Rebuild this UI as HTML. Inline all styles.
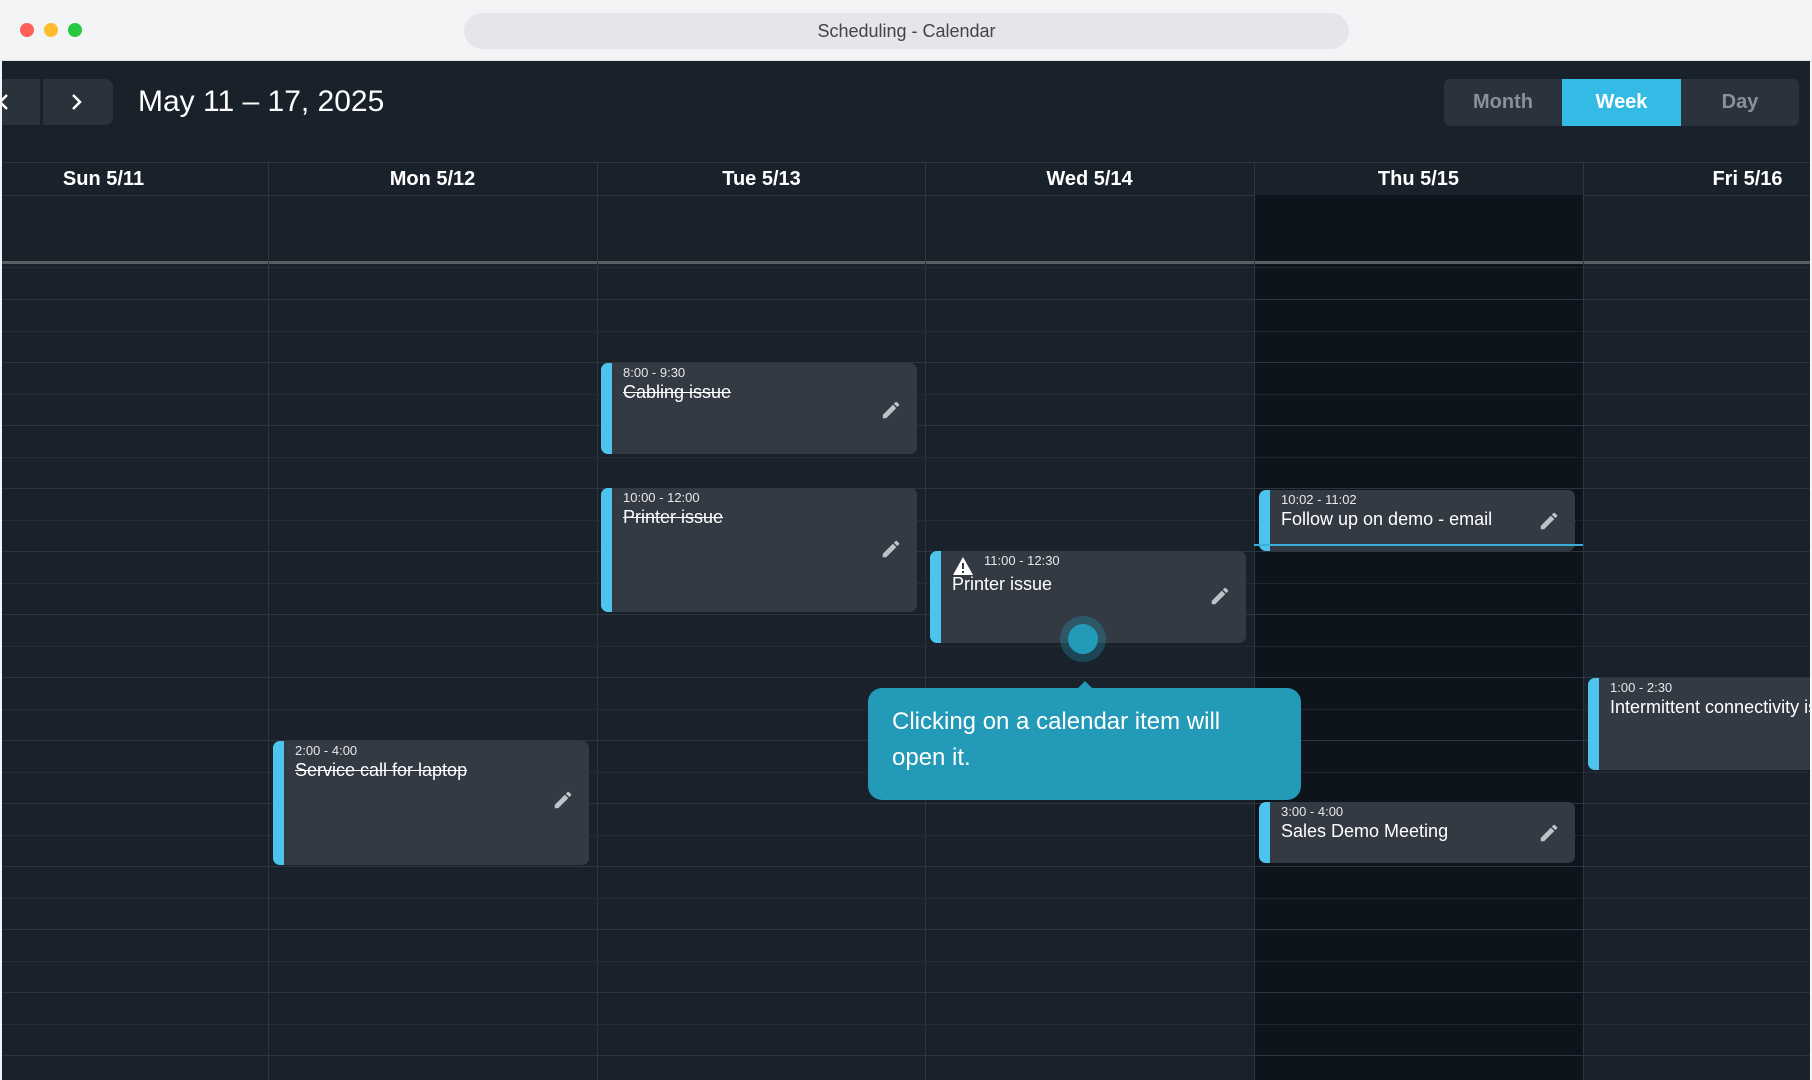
<!DOCTYPE html>
<html><head><style>
*{box-sizing:border-box;margin:0;padding:0}
body{width:1812px;height:1080px;overflow:hidden;background:#f3f4f6;font-family:"Liberation Sans",sans-serif;position:relative}
.tb{position:absolute;left:0;top:0;width:1812px;height:61px;background:#f3f4f6;border-bottom:1px solid #e2e4e8}
.dot{position:absolute;top:23px;width:14px;height:14px;border-radius:50%}
.addr{position:absolute;left:464px;top:13px;width:885px;height:36px;border-radius:18px;background:#e4e6ea;color:#444;font-size:18px;text-align:center;line-height:36px}
.app{position:absolute;left:2px;top:61px;width:1808px;height:1019px;background:#19212b;overflow:hidden}
.abs{position:absolute}
.hl{position:absolute;left:0;width:1808px;height:1px;background:#2c3540}
.dl{position:absolute;left:0;width:1808px;height:0;border-top:1px dotted #2c3540}
.vl{position:absolute;width:1px;background:#2c3540}
.hd{position:absolute;top:102px;width:329px;text-align:center;color:#fff;font-weight:bold;font-size:20px;line-height:33px}
.ev{position:absolute;background:#333a44;border-radius:7px;overflow:hidden;color:#fff}
.ev .bar{position:absolute;left:0;top:0;bottom:0;width:11px;background:#4cc4ee}
.ev .t{position:absolute;left:22px;top:2px;font-size:13px;color:#e8e8e8}
.ev .n{position:absolute;left:22px;top:19px;font-size:18px;white-space:nowrap}
.ev .s{text-decoration:line-through}
.ev svg{position:absolute;right:15px}
</style></head><body>
<div class="tb">
<div class="dot" style="left:20px;background:#fe5f57"></div>
<div class="dot" style="left:44px;background:#febc2e"></div>
<div class="dot" style="left:68px;background:#28c840"></div>
<div class="addr">Scheduling - Calendar</div>
</div>
<div class="app">
<div class="abs" style="left:-6px;top:18px;width:44px;height:46px;background:#2a323c"></div>
<svg class="abs" style="left:-4px;top:32px" width="14" height="18"><path d="M9 2l-7 7 7 7" stroke="#fff" stroke-width="2.5" fill="none"/></svg>
<div class="abs" style="left:41px;top:18px;width:70px;height:46px;background:#2a323c;border-radius:0 8px 8px 0"></div>
<svg class="abs" style="left:68px;top:32px" width="14" height="18"><path d="M3 2l7 7-7 7" stroke="#fff" stroke-width="2.5" fill="none"/></svg>
<div class="abs" style="left:136px;top:22px;color:#fff;font-size:30px;line-height:38px">May 11 – 17, 2025</div>
<div class="abs" style="left:1442px;top:18px;width:355px;height:47px;background:#2a323c;border-radius:6px"></div>
<div class="abs" style="left:1442px;top:18px;width:118px;height:47px;line-height:47px;text-align:center;color:#8a9099;font-weight:bold;font-size:20px">Month</div>
<div class="abs" style="left:1560px;top:18px;width:119px;height:47px;line-height:47px;text-align:center;color:#fff;font-weight:bold;font-size:20px;background:#33bbe6">Week</div>
<div class="abs" style="left:1679px;top:18px;width:118px;height:47px;line-height:47px;text-align:center;color:#8a9099;font-weight:bold;font-size:20px">Day</div>

<div class="hl" style="top:101px"></div>
<div class="hl" style="top:134px"></div>
<div class="abs" style="left:1252px;top:134px;width:329px;height:900px;background:#0d141c"></div>
<div class="abs" style="left:0;top:200px;width:1808px;height:3px;background:#5a5f66"></div>
<div class="dl" style="top:206px"></div>
<div class="hl" style="top:238px"></div><div class="dl" style="top:270px"></div>
<div class="hl" style="top:301px"></div><div class="dl" style="top:333px"></div>
<div class="hl" style="top:364px"></div><div class="dl" style="top:396px"></div>
<div class="hl" style="top:427px"></div><div class="dl" style="top:459px"></div>
<div class="hl" style="top:490px"></div><div class="dl" style="top:522px"></div>
<div class="hl" style="top:553px"></div><div class="dl" style="top:585px"></div>
<div class="hl" style="top:616px"></div><div class="dl" style="top:648px"></div>
<div class="hl" style="top:679px"></div><div class="dl" style="top:711px"></div>
<div class="hl" style="top:742px"></div><div class="dl" style="top:774px"></div>
<div class="hl" style="top:805px"></div><div class="dl" style="top:837px"></div>
<div class="hl" style="top:868px"></div><div class="dl" style="top:900px"></div>
<div class="hl" style="top:931px"></div><div class="dl" style="top:963px"></div>
<div class="hl" style="top:994px"></div>
<div class="vl" style="left:266px;top:101px;height:920px"></div>
<div class="vl" style="left:595px;top:101px;height:920px"></div>
<div class="vl" style="left:923px;top:101px;height:920px"></div>
<div class="vl" style="left:1252px;top:101px;height:920px"></div>
<div class="vl" style="left:1581px;top:101px;height:920px"></div>
<div class="hd" style="left:-63px">Sun 5/11</div>
<div class="hd" style="left:266px">Mon 5/12</div>
<div class="hd" style="left:595px">Tue 5/13</div>
<div class="hd" style="left:923px">Wed 5/14</div>
<div class="hd" style="left:1252px">Thu 5/15</div>
<div class="hd" style="left:1581px">Fri 5/16</div>

<svg width="0" height="0" style="position:absolute"><defs><symbol id="pen" viewBox="0 0 24 24"><path d="M3 17.25V21h3.75L17.81 9.94l-3.75-3.75L3 17.25zM20.71 7.04a1 1 0 000-1.410l-2.34-2.34a1 1 0 00-1.41 0l-1.83 1.83 3.75 3.75 1.83-1.83z" fill="#bfc3c8"/></symbol></defs></svg>

<div class="ev" style="left:599px;top:302px;width:316px;height:91px"><div class="bar"></div><div class="t">8:00 - 9:30</div><div class="n s">Cabling issue</div><svg style="top:36px" width="22" height="22"><use href="#pen"/></svg></div>
<div class="ev" style="left:599px;top:427px;width:316px;height:124px"><div class="bar"></div><div class="t">10:00 - 12:00</div><div class="n s">Printer issue</div><svg style="top:50px" width="22" height="22"><use href="#pen"/></svg></div>
<div class="ev" style="left:928px;top:490px;width:316px;height:92px"><div class="bar"></div>
<svg style="position:absolute;left:22px;top:5px" width="22" height="20" viewBox="0 0 22 20"><path d="M11 1L21 19H1z" fill="#fff"/><path d="M11 7v6M11 15v2" stroke="#333a44" stroke-width="2"/></svg>
<div class="t" style="left:54px">11:00 - 12:30</div><div class="n" style="top:23px">Printer issue</div><svg style="top:34px" width="22" height="22"><use href="#pen"/></svg></div>
<div class="ev" style="left:1257px;top:429px;width:316px;height:61px"><div class="bar"></div><div class="t">10:02 - 11:02</div><div class="n">Follow up on demo - email</div><svg style="top:20px" width="22" height="22"><use href="#pen"/></svg></div>
<div class="abs" style="left:1252px;top:483px;width:329px;height:2px;background:#3aaed6"></div>
<div class="ev" style="left:1257px;top:741px;width:316px;height:61px"><div class="bar"></div><div class="t">3:00 - 4:00</div><div class="n">Sales Demo Meeting</div><svg style="top:20px" width="22" height="22"><use href="#pen"/></svg></div>
<div class="ev" style="left:271px;top:680px;width:316px;height:124px"><div class="bar"></div><div class="t">2:00 - 4:00</div><div class="n s">Service call for laptop</div><svg style="top:48px" width="22" height="22"><use href="#pen"/></svg></div>
<div class="ev" style="left:1586px;top:617px;width:240px;height:92px;border-radius:7px 0 0 7px"><div class="bar"></div><div class="t">1:00 - 2:30</div><div class="n">Intermittent connectivity issue</div></div>

<div class="abs" style="left:1058px;top:555px;width:46px;height:46px;border-radius:50%;background:rgba(35,154,184,0.3)"></div>
<div class="abs" style="left:1066px;top:563px;width:30px;height:30px;border-radius:50%;background:#239ab8"></div>
<div class="abs" style="left:1075px;top:620px;width:0;height:0;border-left:8px solid transparent;border-right:8px solid transparent;border-bottom:8px solid #239ab8"></div>
<div class="abs" style="left:866px;top:627px;width:433px;height:112px;background:#239ab8;border-radius:14px;color:#fff;font-size:24px;line-height:36px;padding:16px 24px">Clicking on a calendar item will open it.</div>
</div>
</body></html>
